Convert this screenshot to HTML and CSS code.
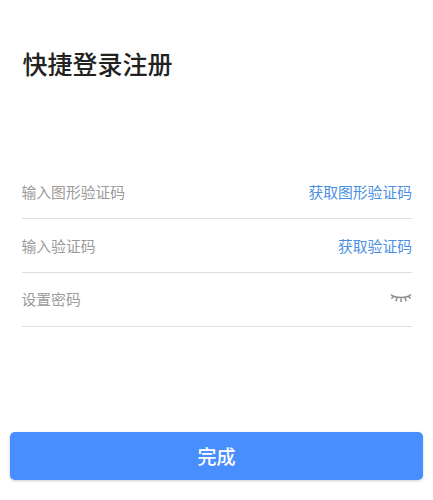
FILE: index.html
```html
<!DOCTYPE html>
<html lang="zh-CN">
<head>
    <meta charset="UTF-8">
    <meta name="viewport" content="width=device-width, initial-scale=1.0">
    <title>快捷登录注册</title>
    <link rel="stylesheet" href="styles.css">
</head>
<body>
    <div class="page">
        <h1 class="title">快捷登录注册</h1>

        <form class="form">
            <div class="field">
                <span class="placeholder">输入图形验证码</span>
                <a class="link">获取图形验证码</a>
            </div>
            <div class="field">
                <span class="placeholder">输入验证码</span>
                <a class="link">获取验证码</a>
            </div>
            <div class="field field-last">
                <span class="placeholder">设置密码</span>
                <svg class="eye" width="22" height="11" viewBox="0 0 22 11" fill="none" stroke="#8a8a8a" stroke-width="1.5">
                    <path d="M1 1.5C5 5.5 17 5.5 21 1.5"/>
                    <path d="M3.5 3.4L1.4 5.6M7 5L5.8 8.2M11 5.6V9M15 5L16.2 8.2M18.5 3.4L20.6 5.6"/>
                </svg>
            </div>
        </form>

        <button class="button" type="button">完成</button>
    </div>
</body>
</html>
```

FILE: styles.css
```css
* {
    margin: 0;
    padding: 0;
    box-sizing: border-box;
}
body {
    font-family: "Liberation Sans", "Noto Sans CJK SC", sans-serif;
    background-color: #ffffff;
}

.page {
    height: 500px;
    display: flex;
    flex-direction: column;
    padding: 0 10px 20px;
}

.title {
    font-size: 25px;
    line-height: 32px;
    font-weight: 500;
    color: #222222;
    margin-top: 49px;
    padding-left: 12.5px;
}

.form {
    margin-top: 84px;
    padding: 0 11px 0 11.5px;
}

.field {
    height: 54px;
    display: flex;
    align-items: center;
    justify-content: space-between;
    border-bottom: 1px solid #dedede;
}

.field-last {
    padding-bottom: 2px;
}

.placeholder {
    font-size: 14.8px;
    color: #9b9b9b;
}

.link {
    font-size: 14.8px;
    color: #4a90e2;
}

.button {
    margin-top: auto;
    height: 48px;
    padding-bottom: 2px;
    border: none;
    border-radius: 5px;
    background-color: #488efe;
    color: #ffffff;
    font-family: inherit;
    font-size: 19px;
    font-weight: 500;
    box-shadow: 0 1px 3px rgba(0, 0, 0, 0.2);
}
```
